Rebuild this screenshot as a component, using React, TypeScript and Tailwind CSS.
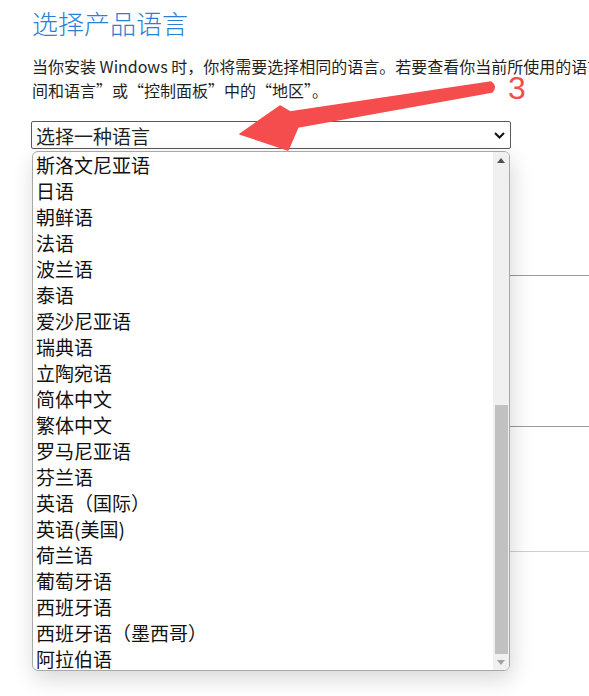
import React from 'react';

const languages = [
    '斯洛文尼亚语',
    '日语',
    '朝鲜语',
    '法语',
    '波兰语',
    '泰语',
    '爱沙尼亚语',
    '瑞典语',
    '立陶宛语',
    '简体中文',
    '繁体中文',
    '罗马尼亚语',
    '芬兰语',
    '英语（国际）',
    '英语(美国)',
    '荷兰语',
    '葡萄牙语',
    '西班牙语',
    '西班牙语（墨西哥）',
    '阿拉伯语',
];

function Chevron() {
    return (
        <svg width="11" height="7" viewBox="0 0 11 7" className="shrink-0">
            <path d="M1 1 L5.5 5.5 L10 1" fill="none" stroke="#111" strokeWidth="2" />
        </svg>
    );
}

function ScrollBar() {
    return (
        <div className="flex w-[16px] shrink-0 flex-col bg-[#f0f0f0]">
            <div className="flex h-[17px] items-center justify-center">
                <svg width="8" height="5" viewBox="0 0 8 5">
                    <path d="M0 5 L4 0 L8 5 Z" fill="#505050" />
                </svg>
            </div>
            <div className="flex-1" />
            <div className="ml-[2px] mr-[1px] h-[249px] bg-[#c1c1c1]" />
            <div className="flex h-[16px] items-center justify-center">
                <svg width="8" height="5" viewBox="0 0 8 5">
                    <path d="M0 0 L8 0 L4 5 Z" fill="#a3a3a3" />
                </svg>
            </div>
        </div>
    );
}

export default function App() {
    return (
        <div className="relative h-[696px] w-full overflow-hidden bg-white font-['Noto_Sans_CJK_SC','Liberation_Sans',sans-serif] text-[#1f1f1f]">
            <div className="w-[1000px] pl-8 pt-[5px]">
                {/* Heading */}
                <h1 className="text-[26px] font-light leading-[36px] text-[#2b7fd4]">选择产品语言</h1>

                {/* Intro copy, runs past the window edge */}
                <p className="mt-[13px] text-[16px] leading-[24px]">
                    <span className="block whitespace-nowrap">
                        当你安装 Windows 时，你将需要选择相同的语言。若要查看你当前所使用的语言，请转到电脑设置中的“时
                    </span>
                    <span className="block whitespace-nowrap">间和语言”或“控制面板”中的“地区”。</span>
                </p>

                {/* Select */}
                <div className="mt-[19px] flex h-[28px] w-[480px] -translate-x-px items-center justify-between rounded-[2px] border border-[#5a5a5a] bg-white pl-[4px] pr-[5px]">
                    <span className="text-[19px] leading-none">选择一种语言</span>
                    <Chevron />
                </div>

                {/* Page sections sitting behind the open list */}
                <div className="mt-[126px] border-t border-[#9a9a9a]" />
                <div className="mt-[150px] border-t border-[#9a9a9a]" />
                <div className="mt-[124px] border-t border-[#cfcfcf]" />
            </div>

            {/* Open dropdown list */}
            <div className="absolute left-[32px] top-[151px] flex h-[520px] w-[478px] overflow-hidden rounded-[6px] border border-[#a8a8a8] bg-white shadow-[2px_8px_22px_rgba(0,0,0,0.16)]">
                <ul className="flex-1 pl-[3px]">
                    {languages.map((lang) => (
                        <li key={lang} className="h-[26px] whitespace-nowrap text-[19px] leading-[26px] text-[#111]">
                            {lang}
                        </li>
                    ))}
                </ul>
                <ScrollBar />
            </div>

            {/* Red annotation arrow */}
            <svg className="pointer-events-none absolute left-0 top-0" width="589" height="696" viewBox="0 0 589 696">
                <path
                    d="M240 134 L280 106 L290 112 L491 82 Q497 86 492 92 L298 127 L288 150 Z"
                    fill="#f54d4d"
                    stroke="#f54d4d"
                    strokeWidth="1.5"
                    strokeLinejoin="round"
                />
            </svg>
            <div className="absolute left-[508px] top-[72px] font-['Liberation_Sans',sans-serif] text-[32px] leading-none text-[#f54d4d]">
                3
            </div>
        </div>
    );
}
